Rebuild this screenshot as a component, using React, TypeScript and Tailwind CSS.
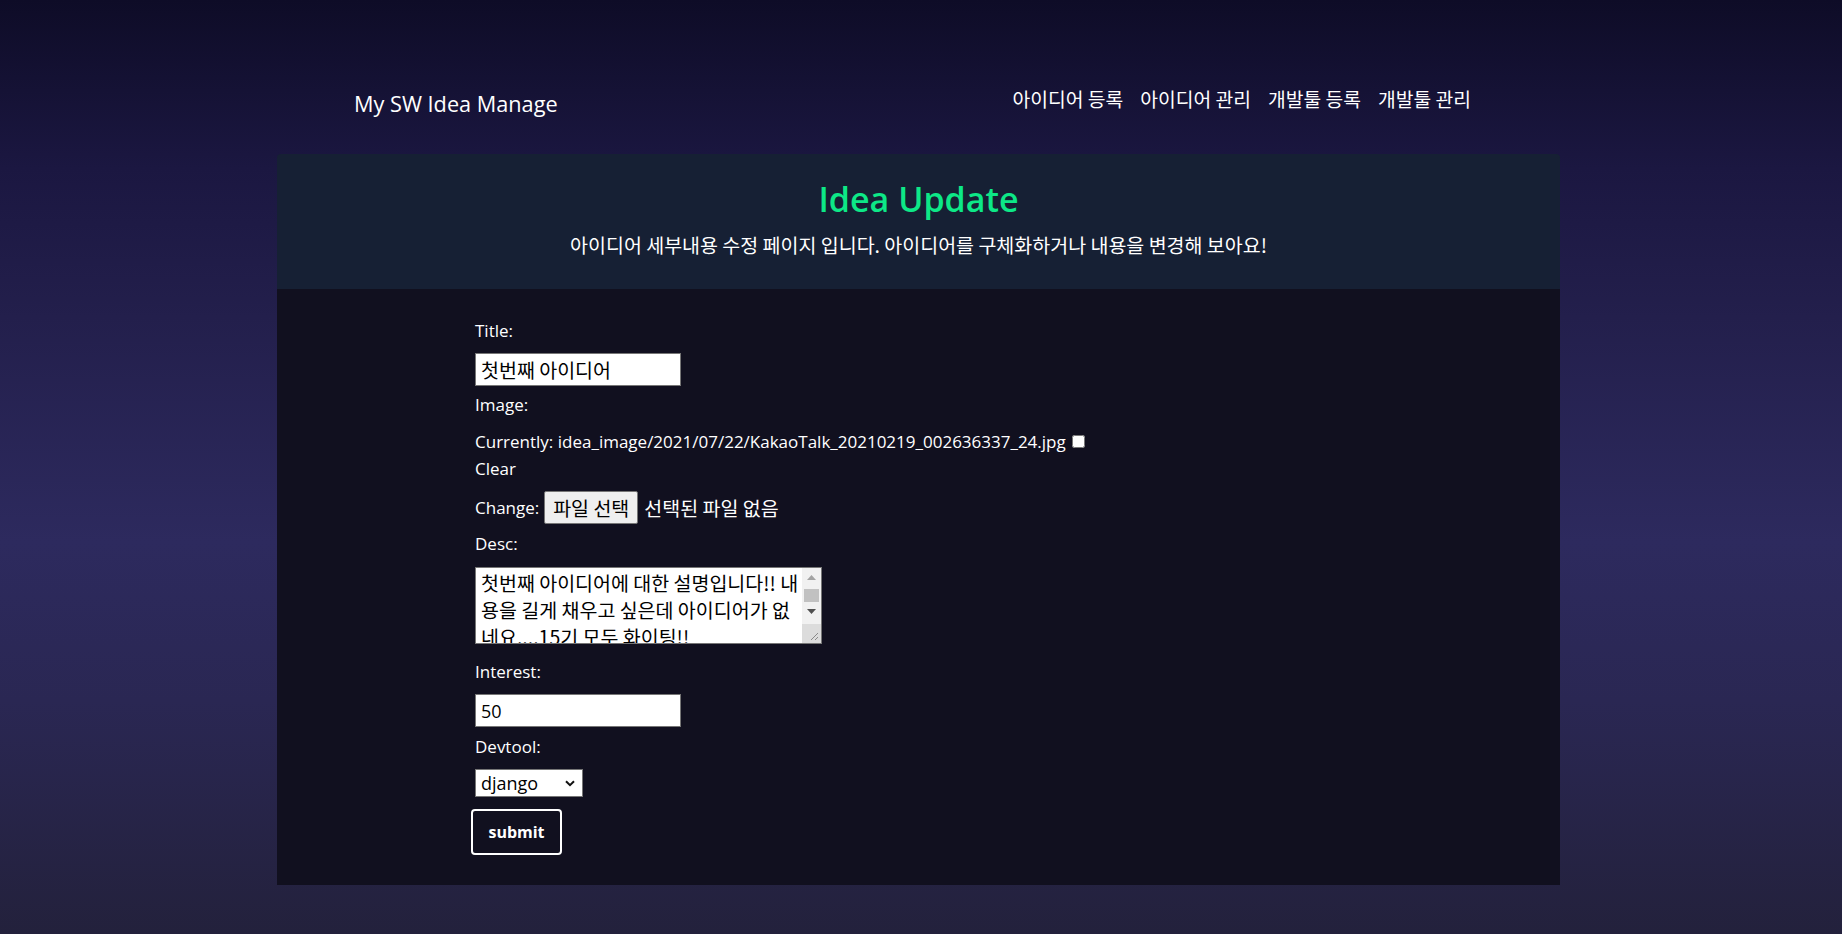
import React from 'react';

const navLinks = ['아이디어 등록', '아이디어 관리', '개발툴 등록', '개발툴 관리'];

const latin = "font-['Open_Sans',sans-serif]";
const korean = "font-['Noto_Sans_CJK_KR','Open_Sans',sans-serif]";

const Label = ({ children, className = '' }: { children: React.ReactNode; className?: string }) => (
  <div className={`text-[17px] leading-[27px] text-white ${latin} ${className}`}>{children}</div>
);

// windows style scrollbar drawn over the textarea
const FakeScrollbar = () => (
  <div className="absolute top-[1px] right-[1px] bottom-[1px] w-[19px] flex flex-col bg-[#f1f1f1] pointer-events-none">
    <div className="h-[19px] flex items-center justify-center">
      <svg width="9" height="5" viewBox="0 0 9 5">
        <path d="M0 5 4.5 0 9 5Z" fill="#a3a3a3" />
      </svg>
    </div>
    <div className="px-[2px] pt-[2px]">
      <div className="h-[13px] bg-[#c1c1c1]" />
    </div>
    <div className="h-[18px] flex items-center justify-center">
      <svg width="9" height="5" viewBox="0 0 9 5">
        <path d="M0 0 4.5 5 9 0Z" fill="#505050" />
      </svg>
    </div>
    <div className="mt-auto h-[19px] bg-[#dcdcdc] flex items-end justify-end p-[2px]">
      <svg width="10" height="10" viewBox="0 0 10 10">
        <path d="M9 2 2 9M9 6 6 9" stroke="#8a8a8a" strokeWidth="1" />
      </svg>
    </div>
  </div>
);

const App: React.FC = () => {
  return (
    <div className="min-h-screen w-full bg-[linear-gradient(180deg,#0e0c27_0%,#1b1741_18%,#231f4c_34%,#2d2a5e_58%,#2a2753_75%,#23213c_100%)]">
      <div className="w-[1283px] ml-[277px]">
        {/* navbar */}
        <nav className="flex items-start justify-between pt-[84px] pl-[77px] pr-[89px]">
          <a className={`mt-[5px] text-[21.7px] leading-[30px] text-white ${latin}`}>My SW Idea Manage</a>
          <ul className="flex gap-[17px]">
            {navLinks.map((link) => (
              <li key={link}>
                <a className={`text-[19.3px] leading-[30px] text-white whitespace-nowrap ${korean}`}>{link}</a>
              </li>
            ))}
          </ul>
        </nav>

        {/* hero */}
        <section className="mt-[35px] rounded-t-[4px] bg-[#162034] pt-[23px] pb-[30px] text-center">
          <h1 className={`text-[34px] leading-[44px] font-semibold text-[#0de887] ${latin}`}>Idea Update</h1>
          <p className={`mt-[10px] text-[19.5px] leading-[28px] text-white ${korean}`}>
            아이디어 세부내용 수정 페이지 입니다. 아이디어를 구체화하거나 내용을 변경해 보아요!
          </p>
        </section>

        {/* form */}
        <form className="bg-[#11101f] pl-[198px] pt-[28px] pb-[30px]" onSubmit={(e) => e.preventDefault()}>
          <Label>Title:</Label>
          <input
            defaultValue="첫번째 아이디어"
            className={`mt-[9px] block w-[206px] h-[33px] bg-white border border-[#767676] px-[5px] text-[19.5px] text-black outline-none ${korean}`}
          />

          <Label className="mt-[5px]">Image:</Label>
          <Label className="mt-[10px]">
            Currently: idea_image/2021/07/22/KakaoTalk_20210219_002636337_24.jpg
            <input type="checkbox" className="ml-[6px] w-[13px] h-[13px]" />
          </Label>
          <Label>Clear</Label>

          <div className="mt-[9px] flex items-center h-[33px]">
            <span className={`text-[17px] text-white ${latin}`}>Change:</span>
            <button
              type="button"
              className={`ml-[5px] h-[33px] w-[94px] bg-[#efefef] border border-[#767676] rounded-[2px] text-[19.5px] text-black ${korean}`}
            >
              파일 선택
            </button>
            <span className={`ml-[6px] text-[19.5px] text-white ${korean}`}>선택된 파일 없음</span>
          </div>

          <Label className="mt-[6px]">Desc:</Label>
          <div className="relative mt-[10px] w-[347px] h-[77px]">
            <textarea
              defaultValue="첫번째 아이디어에 대한 설명입니다!! 내용을 길게 채우고 싶은데 아이디어가 없네요....15기 모두 화이팅!!"
              className={`block w-full h-full bg-white border border-[#767676] pl-[5px] pr-[22px] pt-[1px] text-[19.5px] leading-[27px] text-black outline-none resize-none overflow-hidden ${korean}`}
            />
            <FakeScrollbar />
          </div>

          <Label className="mt-[14px]">Interest:</Label>
          <input
            defaultValue="50"
            className={`mt-[9px] block w-[206px] h-[33px] bg-white border border-[#767676] px-[5px] text-[18px] text-black outline-none ${latin}`}
          />

          <Label className="mt-[6px]">Devtool:</Label>
          <div className="relative mt-[9px] w-[108px] h-[28px]">
            <select
              defaultValue="django"
              className={`appearance-none w-full h-full bg-white border border-[#767676] rounded-none pl-[5px] text-[18px] text-black outline-none ${latin}`}
            >
              <option value="django">django</option>
            </select>
            <svg
              className="absolute right-[8px] top-[11px] pointer-events-none"
              width="10"
              height="7"
              viewBox="0 0 10 7"
              fill="none"
            >
              <path d="M1 1.2 5 5.2 9 1.2" stroke="#111" strokeWidth="2" />
            </svg>
          </div>

          <button
            type="submit"
            className={`mt-[12px] -ml-[4px] w-[91px] h-[46px] border-2 border-white rounded-[4px] text-[16px] font-bold text-white ${latin}`}
          >
            submit
          </button>
        </form>
      </div>
    </div>
  );
};

export default App;
